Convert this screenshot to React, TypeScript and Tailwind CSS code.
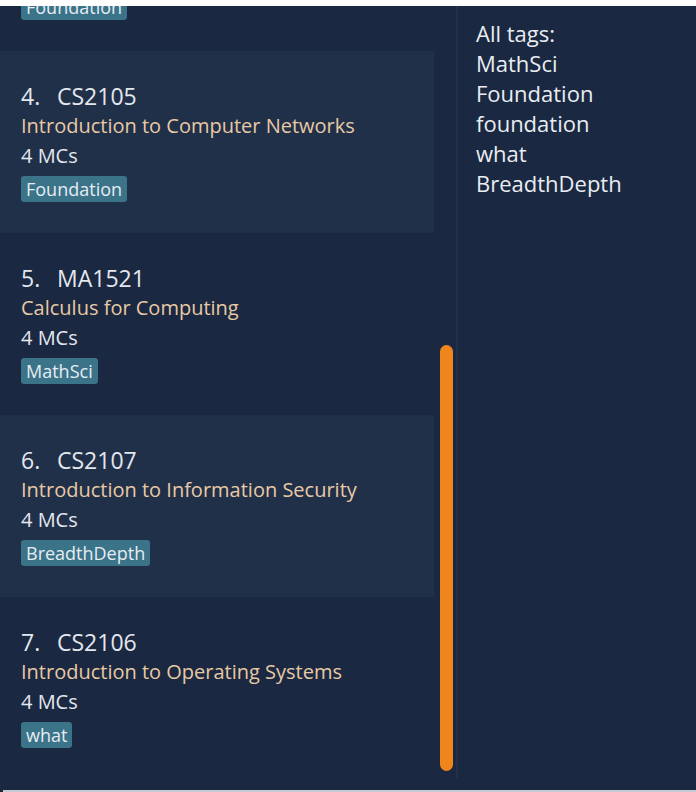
import React from 'react';

type Mod = { idx: number; code: string; title: string; mcs: number; tags: string[] };

const mods: Mod[] = [
  { idx: 3, code: 'CS2103T', title: 'Software Engineering', mcs: 4, tags: ['Foundation'] },
  { idx: 4, code: 'CS2105', title: 'Introduction to Computer Networks', mcs: 4, tags: ['Foundation'] },
  { idx: 5, code: 'MA1521', title: 'Calculus for Computing', mcs: 4, tags: ['MathSci'] },
  { idx: 6, code: 'CS2107', title: 'Introduction to Information Security', mcs: 4, tags: ['BreadthDepth'] },
  { idx: 7, code: 'CS2106', title: 'Introduction to Operating Systems', mcs: 4, tags: ['what'] },
];

const allTags = ['MathSci', 'Foundation', 'foundation', 'what', 'BreadthDepth'];

const ModCard = ({ m }: { m: Mod }) => (
  <div
    className={
      'h-[182px] shrink-0 pl-[21px] pt-[30px] ' +
      (m.idx % 2 === 0 ? 'bg-[#213049]' : 'bg-[#1a2841]')
    }
  >
    <div className="flex text-[23px] leading-[30px] text-[#e3e7ee]">
      <span className="w-[36px] shrink-0">{m.idx}.</span>
      <span>{m.code}</span>
    </div>
    <div className="text-[20px] leading-[30px] text-[#e8c9a5]">{m.title}</div>
    <div className="text-[20px] leading-[30px] text-[#e3e7ee]">{m.mcs} MCs</div>
    <div className="mt-[5px] flex gap-2">
      {m.tags.map((t) => (
        <span
          key={t}
          className="h-[26px] rounded-[3px] bg-[#3b7389] px-[5px] text-[18px] leading-[26px] text-[#e6edf2]"
        >
          {t}
        </span>
      ))}
    </div>
  </div>
);

export default function App() {
  return (
    <div
      className="flex h-[792px] w-[696px] flex-col overflow-hidden bg-white"
      style={{ fontFamily: '"Open Sans", "Noto Sans", sans-serif' }}
    >
      <div className="h-[6px] shrink-0 bg-white" />
      <div className="flex h-[784px] shrink-0 bg-[#1a2841]">
        {/* module list */}
        <div className="flex w-[456px] shrink-0">
          <div className="w-[434px] shrink-0 overflow-hidden">
            <div className="-mt-[137px] flex flex-col">
              {mods.map((m) => (
                <ModCard key={m.idx} m={m} />
              ))}
            </div>
          </div>
          <div className="flex w-[22px] shrink-0 flex-col pl-[6px] pt-[339px]">
            <div className="h-[426px] w-[13px] rounded-full bg-[#f0861b]" />
          </div>
        </div>
        <div className="mb-[12px] w-[2px] shrink-0 bg-[#22304a]" />
        {/* tags panel */}
        <div className="flex-1 pl-[18px] pt-[12px] text-[22px] leading-[30px] text-[#e9edf2]">
          <div>All tags:</div>
          {allTags.map((t) => (
            <div key={t}>{t}</div>
          ))}
        </div>
      </div>
      <div className="flex h-[2px] shrink-0 bg-[#1a2841]">
        <div className="ml-[3px] flex-1 bg-[#c5cad3]" />
      </div>
    </div>
  );
}
